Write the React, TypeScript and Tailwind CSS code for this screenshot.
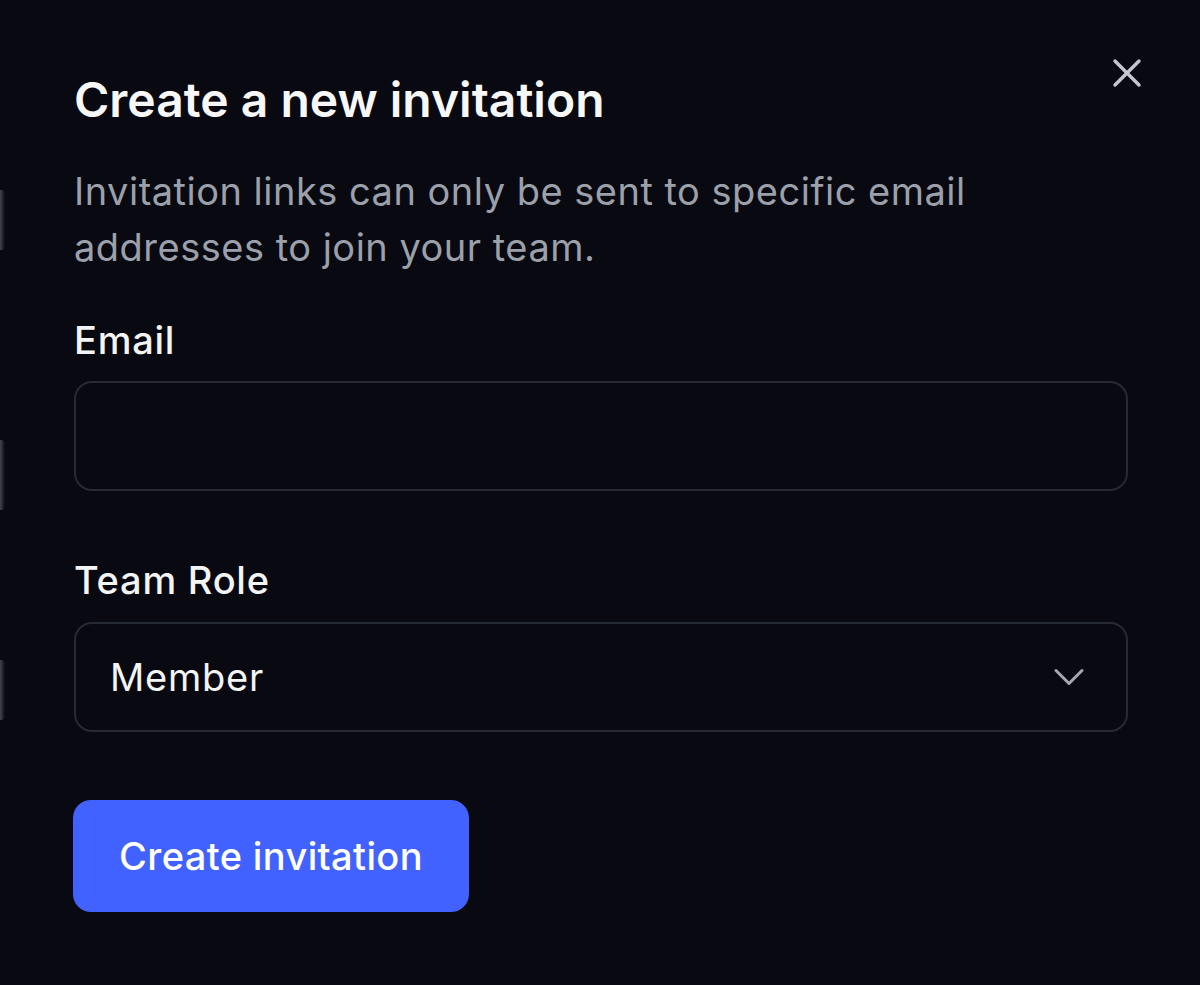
import { X, ChevronDown } from "lucide-react";

const font = { fontFamily: "Inter, 'Noto Sans', sans-serif" };

const InviteDialog = () => {
  return (
    <div
      className="min-h-[985px] w-[1200px] bg-[#080911] flex text-white"
      style={font}
    >
      {/* bits of the page behind the dialog, bleeding at the left edge */}
      <div className="w-[6px] flex flex-col">
        <div className="h-[190px]"></div>
        <div className="h-[60px] w-[5px] rounded-r bg-gradient-to-r from-[#6b6e76] to-transparent opacity-60"></div>
        <div className="h-[190px]"></div>
        <div className="h-[70px] w-[5px] rounded-r bg-gradient-to-r from-[#6b6e76] to-transparent opacity-60"></div>
        <div className="h-[150px]"></div>
        <div className="h-[60px] w-[5px] rounded-r bg-gradient-to-r from-[#6b6e76] to-transparent opacity-60"></div>
      </div>

      <div className="flex-1 flex flex-col pl-[68px] pr-[72px] pt-[70px]">
        <div className="flex justify-between items-start">
          <h2 className="text-[48px] leading-[60px] font-semibold text-[#f7f7f8]">
            Create a new invitation
          </h2>
          <button className="mt-[-21px] mr-[-23px] text-[#c4c7cd]">
            <X size={48} strokeWidth={1.7} />
          </button>
        </div>

        <p className="mt-[33px] text-[38px] leading-[56px] tracking-[0.013em] text-[#9ba0aa] max-w-[940px]">
          Invitation links can only be sent to specific email addresses to join
          your team.
        </p>

        <label className="mt-[41px] text-[38px] leading-[48px] tracking-[0.02em] font-medium text-[#f4f4f5]">
          Email
        </label>
        <input
          className="mt-[17px] h-[110px] w-full rounded-[18px] border-2 border-[#252a34] bg-transparent px-[34px] text-[38px] outline-none"
          type="email"
        />

        <label className="mt-[65px] text-[38px] leading-[48px] tracking-[0.02em] font-medium text-[#f4f4f5]">
          Team Role
        </label>
        <div className="mt-[18px] h-[110px] w-full rounded-[18px] border-2 border-[#252a34] flex items-center justify-between pl-[34px] pr-[31px]">
          <span className="text-[38px] tracking-[0.02em] text-[#f4f4f5]">Member</span>
          <ChevronDown size={52} strokeWidth={1.4} className="text-[#a3a7af]" />
        </div>

        <div className="mt-[68px]">
          <button className="h-[112px] w-[396px] ml-[-1px] rounded-[18px] bg-[#4262ff] text-[38px] tracking-[0.01em] font-medium text-white">
            Create invitation
          </button>
        </div>
      </div>
    </div>
  );
};

export default function App() {
  return <InviteDialog />;
}
